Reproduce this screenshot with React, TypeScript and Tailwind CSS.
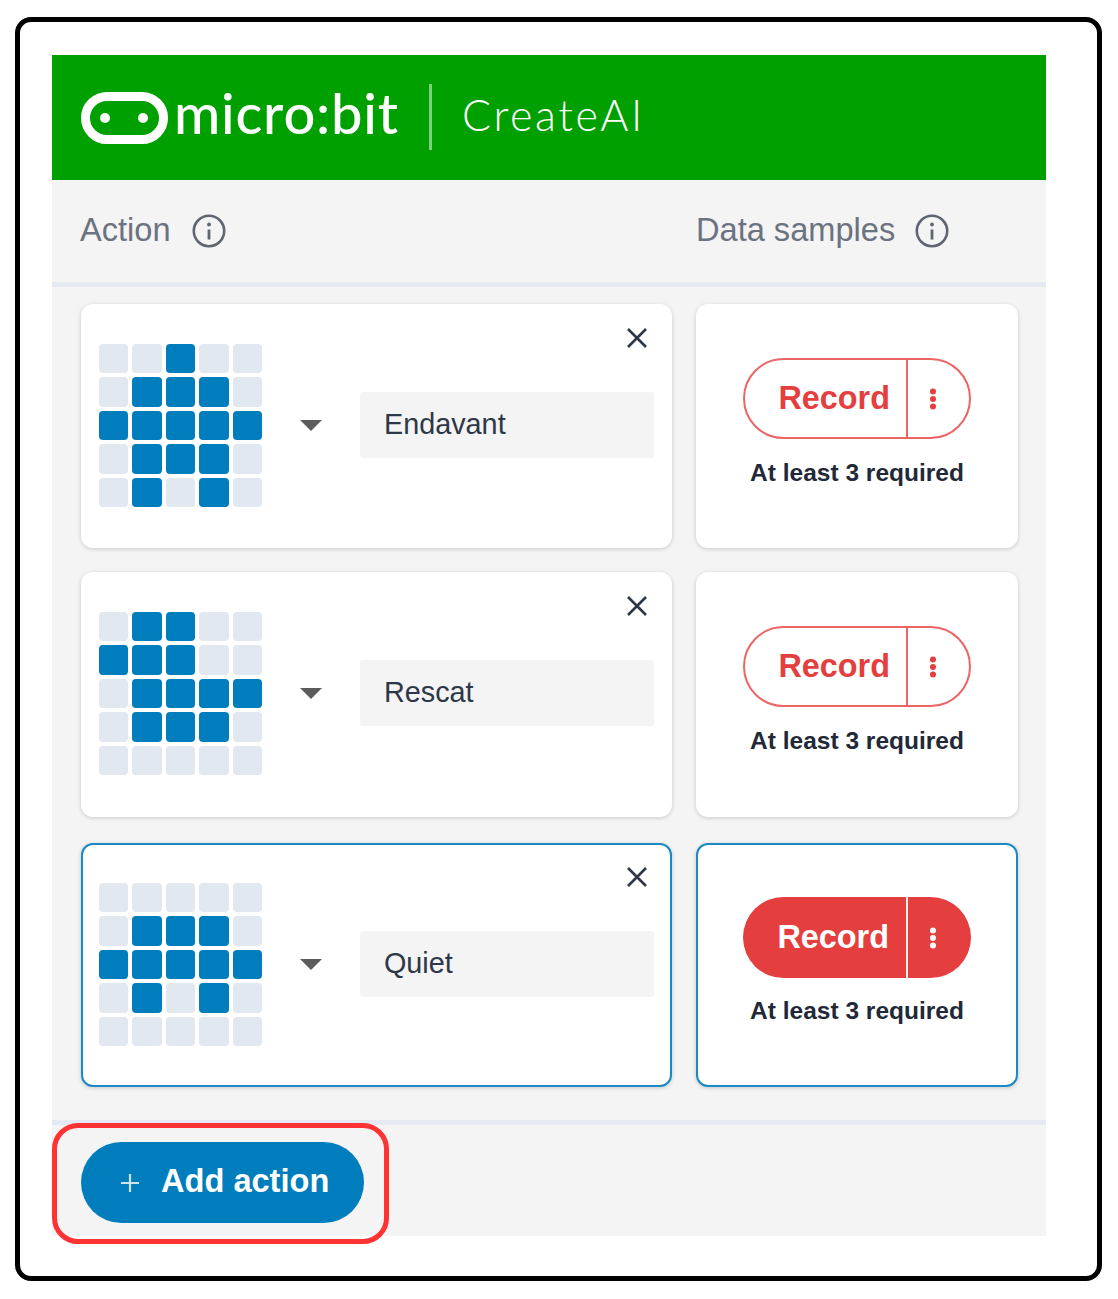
import React from "react";

const sans = "font-['Liberation_Sans',Arial,sans-serif]";

const actions = [
  {
    name: "Endavant",
    icon: ["00100", "01110", "11111", "01110", "01010"],
  },
  {
    name: "Rescat",
    icon: ["01100", "11100", "01111", "01110", "00000"],
  },
  {
    name: "Quiet",
    icon: ["00000", "01110", "11111", "01010", "00000"],
    selected: true,
  },
];

function InfoIcon() {
  return (
    <svg width="34" height="34" viewBox="0 0 34 34" fill="none" className="shrink-0 translate-y-[1px]">
      <circle cx="17" cy="17" r="15.2" stroke="#5f6672" strokeWidth="2.6" />
      <circle cx="17" cy="10.5" r="1.9" fill="#5f6672" />
      <path d="M17 15.5v10" stroke="#5f6672" strokeWidth="2.8" />
    </svg>
  );
}

function LedGrid({ rows }: { rows: string[] }) {
  return (
    <div className="grid grid-cols-[repeat(5,29.4px)] auto-rows-[29.4px] gap-x-[4px] gap-y-[4px] shrink-0">
      {rows.join("").split("").map((led, i) => (
        <div
          key={i}
          className={led === "1" ? "rounded-[4px] bg-[#007dbc]" : "rounded-[4px] bg-[#e2e8f0]"}
        />
      ))}
    </div>
  );
}

function RecordButton({ filled }: { filled?: boolean }) {
  return (
    <div
      className={
        filled
          ? "flex h-[81px] w-[228px] rounded-full bg-[#e53e3e] text-white"
          : "flex h-[81px] w-[228px] rounded-full border-2 border-[#ec6464] bg-white text-[#e53e3e]"
      }
    >
      <div
        className={
          filled
            ? "flex w-[165px] items-center justify-end pr-[17px] border-r-2 border-[#fdeeee] text-[32.4px] font-bold"
            : "flex w-[163px] items-center justify-end pr-[16px] border-r-2 border-[#ec6464] text-[32.4px] font-bold"
        }
      >
        Record
      </div>
      <div className={filled ? "flex flex-1 items-center justify-center pr-[14px]" : "flex flex-1 items-center justify-center pr-[12px]"}>
        <svg width="8" height="24" viewBox="0 0 8 24" fill="currentColor">
          <circle cx="4" cy="4.5" r="3" />
          <circle cx="4" cy="12" r="3" />
          <circle cx="4" cy="19.5" r="3" />
        </svg>
      </div>
    </div>
  );
}

function ActionRow({
  name,
  icon,
  selected,
  className,
}: {
  name: string;
  icon: string[];
  selected?: boolean;
  className?: string;
}) {
  const card = selected
    ? "border-2 border-[#1a8ac4] shadow-[0_1px_4px_rgba(0,0,0,0.18)]"
    : "border-2 border-transparent shadow-[0_1px_4px_rgba(0,0,0,0.18)]";

  return (
    <div className={`flex gap-[24px] pl-[29px] ${className}`}>
      <div className={`relative flex w-[591px] items-start rounded-[12px] bg-white pl-[16px] pt-[38px] ${card}`}>
        <LedGrid rows={icon} />
        <svg width="22" height="11" viewBox="0 0 22 11" className="ml-[38.5px] mt-[76px] shrink-0">
          <path d="M0 0h22L11 11z" fill="#5c5c5c" />
        </svg>
        <div className="ml-[37.5px] mt-[48px] flex h-[66px] w-[294px] items-center rounded-[3px] bg-[#f4f4f4] pl-[24px] text-[28.8px] text-[#2d3748]">
          {name}
        </div>
        <svg width="22" height="22" viewBox="0 0 22 22" className="absolute right-[22px] top-[21px]">
          <path d="M2 2l18 18M20 2L2 20" stroke="#2d3748" strokeWidth="2.6" />
        </svg>
      </div>
      <div className={`flex w-[322px] flex-col items-center rounded-[12px] bg-white pt-[52px] ${card}`}>
        <RecordButton filled={selected} />
        <div
          className={`${selected ? "mt-[17px]" : "mt-[18px]"} text-[24.5px] leading-[32px] font-bold whitespace-nowrap text-[#1f2937]`}
        >
          At least 3 required
        </div>
      </div>
    </div>
  );
}

export default function App() {
  return (
    <div className={`h-[1299px] w-[1118px] overflow-hidden bg-white pl-[15px] pt-[17px] ${sans}`}>
      <div className="relative h-[1264px] w-[1087px] rounded-[16px] border-[5px] border-black pl-[32px] pt-[33px]">
        <div className="h-[1181px] w-[994px] bg-[#f4f4f4]">
          {/* Header */}
          <div className="flex h-[125px] items-center bg-[#00a000] pl-[29px] text-white">
            <svg width="87" height="52" viewBox="0 0 87 52" fill="none" className="shrink-0">
              <rect x="4.5" y="4.5" width="78" height="43" rx="21.5" stroke="white" strokeWidth="9" />
              <circle cx="24" cy="26" r="5" fill="white" />
              <circle cx="62" cy="26" r="5" fill="white" />
            </svg>
            <span className="ml-[6px] w-[226px] font-['Lato',sans-serif] text-[56px] leading-none font-medium tracking-[0.8px] -translate-y-[5px]">
              micro:bit
            </span>
            <div className="ml-[29px] h-[66px] w-[3px] -translate-y-[1px] bg-white/50" />
            <span className="ml-[30px] font-['Lato',sans-serif] text-[43px] leading-none font-light tracking-[2.6px] -translate-y-[3px]">
              CreateAI
            </span>
          </div>

          {/* Column titles */}
          <div className="flex h-[107px] items-center border-b-[5px] border-[#e5eaf2] pl-[28px] pb-[1px] text-[32.6px] text-[#6b7280]">
            <div className="flex w-[616px] items-center gap-[21px]">
              <span>Action</span>
              <InfoIcon />
            </div>
            <div className="flex items-center gap-[20px]">
              <span>Data samples</span>
              <InfoIcon />
            </div>
          </div>

          {/* Actions */}
          <div className="pt-[17px]">
            <ActionRow {...actions[0]} className="h-[244px]" />
            <ActionRow {...actions[1]} className="mt-[24px] h-[245px]" />
            <ActionRow {...actions[2]} className="mt-[26px] h-[244px]" />
          </div>

          {/* Footer */}
          <div className="mt-[33px] border-t-[5px] border-[#e5eaf2] pl-[29px] pt-[17px]">
            <div className="flex h-[81px] w-[283px] items-center rounded-full bg-[#007dbc] pl-[39px] text-white">
              <svg width="20" height="20" viewBox="0 0 20 20" className="shrink-0 opacity-80">
                <path d="M10 1v18M1 10h18" stroke="white" strokeWidth="2.2" />
              </svg>
              <span className="mb-[2px] ml-[21px] text-[32.6px] font-bold whitespace-nowrap">Add action</span>
            </div>
          </div>
        </div>

        {/* Red highlight around the button */}
        <div className="absolute left-[32px] top-[1101px] h-[121px] w-[337px] rounded-[26px] border-[5px] border-[#ff3333]" />
      </div>
    </div>
  );
}
